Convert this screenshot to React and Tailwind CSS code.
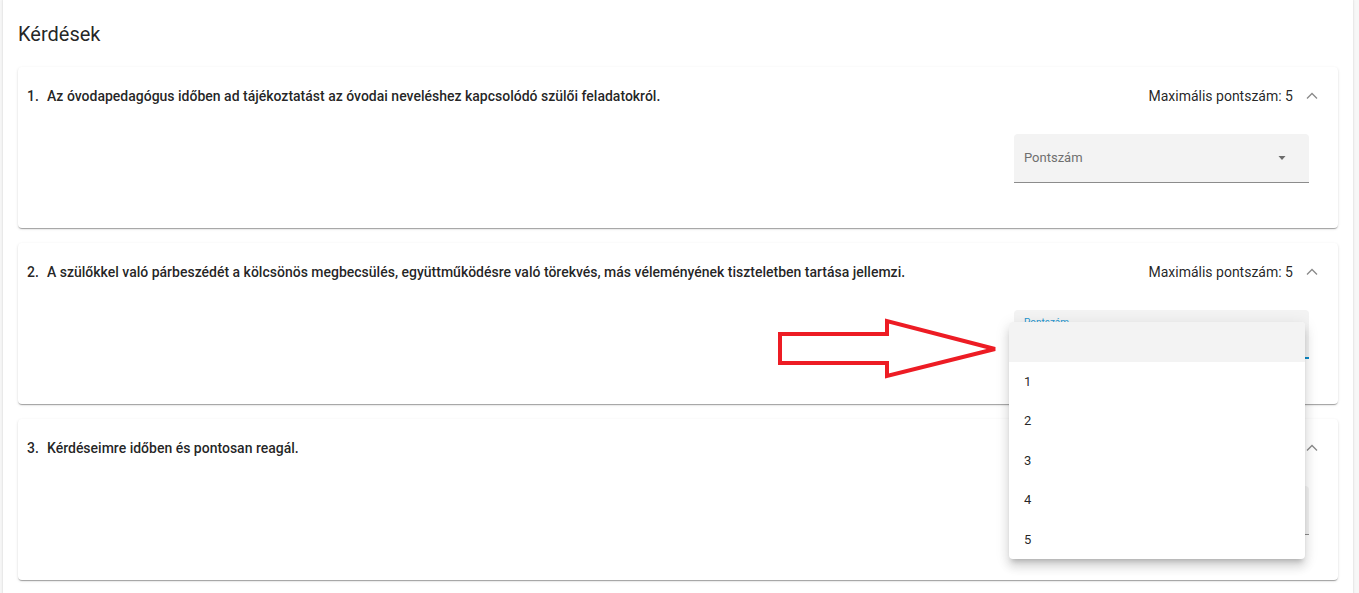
import React from 'react';

const cardShadow =
  'shadow-[0_2px_1px_-1px_rgba(0,0,0,0.2),0_1px_1px_0_rgba(0,0,0,0.14),0_1px_3px_0_rgba(0,0,0,0.12)]';

const questions = [
  {
    id: 1,
    text: 'Az óvodapedagógus időben ad tájékoztatást az óvodai neveléshez kapcsolódó szülői feladatokról.',
  },
  {
    id: 2,
    text: 'A szülőkkel való párbeszédét a kölcsönös megbecsülés, együttműködésre való törekvés, más véleményének tiszteletben tartása jellemzi.',
    focused: true,
  },
  { id: 3, text: 'Kérdéseimre időben és pontosan reagál.' },
];

const ChevronUp = () => (
  <svg width="24" height="24" viewBox="0 0 24 24" fill="none">
    <polyline points="7,14.5 12,9.5 17,14.5" stroke="#8a8a8a" strokeWidth="1.3" />
  </svg>
);

const DropArrow = () => (
  <svg width="10" height="5" viewBox="0 0 10 5">
    <path d="M1.5 0 L8.5 0 L5 4 Z" fill="#6b6b6b" />
  </svg>
);

const ScoreSelect = ({ focused }) => (
  <div className="relative w-[295px] h-[49px] rounded-t-[4px] bg-[#f3f3f3]">
    {focused ? (
      <span className="absolute left-[10px] top-[7px] text-[10px] leading-[12px] text-[#1e96cf]">
        Pontszám
      </span>
    ) : (
      <span className="absolute left-[10px] top-[14px] text-[13px] leading-[20px] text-[#6f6f6f]">
        Pontszám
      </span>
    )}
    <div className="absolute right-[22px] top-[22px] flex">
      <DropArrow />
    </div>
    <div
      className={
        focused
          ? 'absolute left-0 right-0 bottom-0 h-[2px] bg-[#0e8ac8]'
          : 'absolute left-0 right-0 bottom-0 h-px bg-[#8c8c8c]'
      }
    />
  </div>
);

const QuestionCard = ({ q }) => (
  <div className={`h-[161px] rounded-[4px] bg-white ${cardShadow} flex flex-col`}>
    <div className="flex items-center justify-between pt-[18px] pl-[9px] pr-[14px] h-[40px]">
      <div className="flex text-[14px] leading-[20px] font-medium text-[rgba(0,0,0,0.87)]">
        <span className="w-[20px]">{q.id}.</span>
        <span>{q.text}</span>
      </div>
      <div className="flex items-center gap-[7px] text-[14px] leading-[20px] text-[rgba(0,0,0,0.87)]">
        <span>Maximális pontszám: 5</span>
        <ChevronUp />
      </div>
    </div>
    <div className="flex justify-end pr-[29px] mt-[27px]">
      <ScoreSelect focused={q.focused} />
    </div>
  </div>
);

const App = () => {
  return (
    <div
      className="relative h-[593px] w-[1359px] overflow-hidden bg-[#f7f7f7]"
      style={{ fontFamily: 'Roboto, "Liberation Sans", sans-serif' }}
    >
      <div className={`ml-[3px] w-[1350px] h-[620px] -mt-[4px] pt-[4px] rounded-[4px] bg-white ${cardShadow} px-[15px]`}>
        <h2 className="pt-[21px] pb-[20px] text-[20px] leading-[26px] text-[rgba(0,0,0,0.87)]">
          Kérdések
        </h2>
        <div className="flex flex-col gap-[15px]">
          {questions.map((q) => (
            <QuestionCard key={q.id} q={q} />
          ))}
        </div>
      </div>

      {/* open select menu */}
      <div className="absolute left-[1009px] top-[322px] w-[296px] rounded-[4px] bg-white shadow-[0_5px_5px_-3px_rgba(0,0,0,0.2),0_8px_10px_1px_rgba(0,0,0,0.1),0_3px_14px_2px_rgba(0,0,0,0.08)] overflow-hidden">
        <div className="h-[39.5px] bg-[#f3f3f3]" />
        {[1, 2, 3, 4, 5].map((n) => (
          <div key={n} className="h-[39.5px] flex items-center pl-[15px] text-[13px] text-[rgba(0,0,0,0.87)]">
            {n}
          </div>
        ))}
      </div>

      {/* red annotation arrow */}
      <svg className="absolute left-0 top-0 pointer-events-none" width="1359" height="593">
        <polygon
          points="780,334 887,334 887,321 995,349 887,376 887,363 780,363"
          fill="none"
          stroke="#ed1c24"
          strokeWidth="4"
          strokeLinejoin="miter"
        />
      </svg>
    </div>
  );
};

export default App;
